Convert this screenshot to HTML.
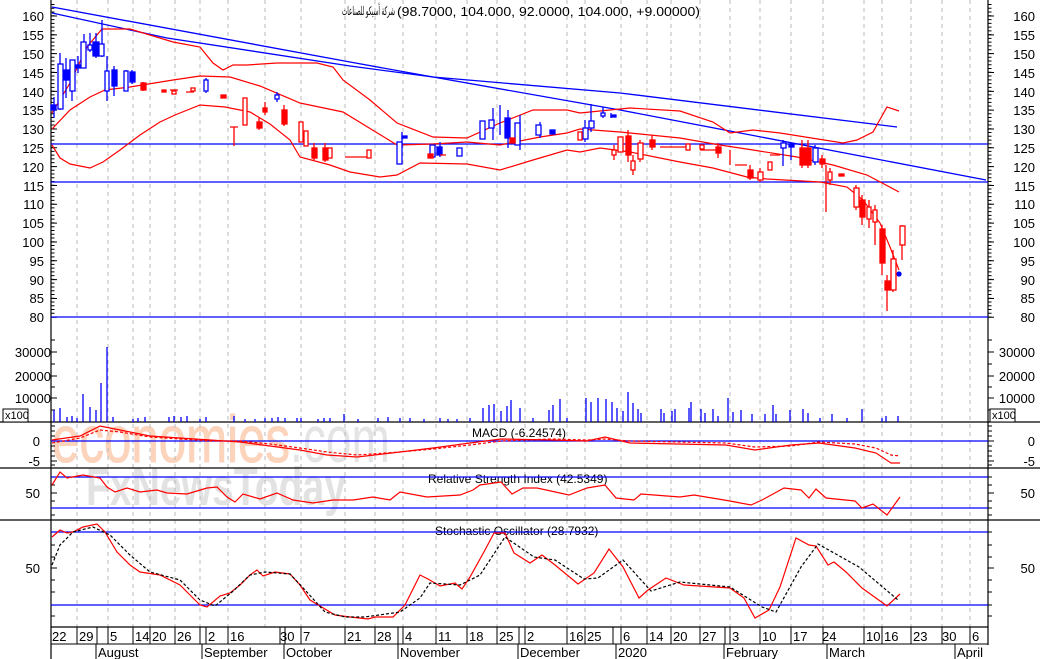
<!DOCTYPE html>
<html><head><meta charset="utf-8"><style>
html,body{margin:0;padding:0;background:#fff;width:1040px;height:659px;overflow:hidden}
svg{display:block}
text{font-family:"Liberation Sans",Arial,sans-serif;font-size:13px;fill:#000}
</style></head><body>
<svg width="1040" height="659" viewBox="0 0 1040 659" xmlns="http://www.w3.org/2000/svg">
<text x="52" y="462" textLength="238" lengthAdjust="spacingAndGlyphs" style="fill:#fcd3bb;font-size:66px;stroke:#fcd3bb;stroke-width:1">economies</text>
<text x="290" y="462" textLength="100" lengthAdjust="spacingAndGlyphs" style="fill:#e4e4e4;font-size:66px">.com</text>
<text x="86" y="505" textLength="260" lengthAdjust="spacingAndGlyphs" style="fill:#e2e2e2;font-size:54px;font-weight:bold">FxNewsToday</text>

<g stroke="#bbb" stroke-width="1" stroke-dasharray="4,4">
<path d="M77 0V627M108 0V627M133 0V627M150 0V627M175 0V627M200 0V627M228 0V627M265 0V627M301 0V627M345 0V627M375 0V627M403 0V627M436 0V627M467 0V627M497 0V627M525 0V627M567 0V627M585 0V627M621 0V627M647 0V627M671 0V627M700 0V627M730 0V627M760 0V627M791 0V627M823 0V627M864 0V627M882 0V627M911 0V627M942 0V627M970 0V627"/>
</g>

<g stroke="#000" stroke-width="1.2" fill="none">
<path d="M51 0V627H988V0"/>
<path d="M0 422H1040M0 468H1040M0 520H1040"/>
<path d="M51 627V659M988 627V645"/>
</g>
<g stroke="#000" stroke-width="3" fill="none" stroke-dasharray="1 2.766">
<path d="M53 4V320M990 4V320"/>
</g>
<g stroke="#000" stroke-width="6" fill="none" stroke-dasharray="1 17.83">
<path d="M54 15.5V320M991 15.5V320"/>
</g>
<g stroke="#000" stroke-width="1">
<path d="M51 352h6M51 376h6M51 398h6M51 340h4M51 364h4M51 387h4M51 410h4M988 352h6M988 376h6M988 398h6M988 340h4M988 364h4M988 387h4M988 410h4"/>
<path d="M51 426h4M51 431h4M51 436h4M51 441h6M51 446h4M51 451h4M51 456h4M51 461h6M51 465h4M988 426h4M988 431h4M988 436h4M988 441h6M988 446h4M988 451h4M988 456h4M988 461h6M988 465h4"/>
<path d="M51 477h4M51 485h4M51 493h6M51 501h4M51 508h4M51 515h4M988 477h4M988 485h4M988 493h6M988 501h4M988 508h4M988 515h4"/>
<path d="M51 532h4M51 545h4M51 557h4M51 568h6M51 580h4M51 592h4M51 605h4M51 616h4M988 532h4M988 545h4M988 557h4M988 568h6M988 580h4M988 592h4M988 605h4M988 616h4"/>
</g>

<g text-anchor="end">
<text x="44" y="21">160</text><text x="44" y="40">155</text><text x="44" y="59">150</text><text x="44" y="78">145</text><text x="44" y="97">140</text><text x="44" y="115">135</text><text x="44" y="134">130</text><text x="44" y="153">125</text><text x="44" y="172">120</text><text x="44" y="191">115</text><text x="44" y="209">110</text><text x="44" y="228">105</text><text x="44" y="247">100</text><text x="44" y="266">95</text><text x="44" y="285">90</text><text x="44" y="303">85</text><text x="44" y="322">80</text>
<text x="51" y="357">30000</text><text x="51" y="381">20000</text><text x="51" y="403">10000</text>
<text x="40" y="446">0</text><text x="40" y="466">-5</text><text x="40" y="498">50</text><text x="40" y="573">50</text>
</g>
<g text-anchor="end">
<text x="1035" y="21">160</text><text x="1035" y="40">155</text><text x="1035" y="59">150</text><text x="1035" y="78">145</text><text x="1035" y="97">140</text><text x="1035" y="115">135</text><text x="1035" y="134">130</text><text x="1035" y="153">125</text><text x="1035" y="172">120</text><text x="1035" y="191">115</text><text x="1035" y="209">110</text><text x="1035" y="228">105</text><text x="1035" y="247">100</text><text x="1035" y="266">95</text><text x="1035" y="285">90</text><text x="1035" y="303">85</text><text x="1035" y="322">80</text>
<text x="1035" y="357">30000</text><text x="1035" y="381">20000</text><text x="1035" y="403">10000</text>
<text x="1035" y="446">0</text><text x="1035" y="466">-5</text><text x="1035" y="498">50</text><text x="1035" y="573">50</text>
</g>
<rect x="3" y="409" width="25" height="13" fill="#fff" stroke="#000"/>
<text x="5" y="419" style="font-size:11px">x100</text>
<rect x="990" y="409" width="25" height="13" fill="#fff" stroke="#000"/>
<text x="992" y="419" style="font-size:11px">x100</text>

<text x="342" y="15" textLength="53" lengthAdjust="spacingAndGlyphs" style="font-size:12px">شركة أسيكو للصناعات</text>
<text x="397" y="16" textLength="303" lengthAdjust="spacingAndGlyphs" style="font-size:13px">(98.7000, 104.000, 92.0000, 104.000, +9.00000)</text>
<text x="472" y="437" style="font-size:12px">MACD (-6.24574)</text>
<text x="428" y="483" style="font-size:12px">Relative Strength Index (42.5349)</text>
<text x="435" y="535" style="font-size:12px">Stochastic Oscillator (28.7932)</text>

<g stroke="#0000ff" stroke-width="1.3" fill="none">
<path d="M51 144H988M51 182H988M51 317H988"/>
<path d="M51 441H988M51 477H988M51 508H988M51 532H988M51 605H988"/>
<polyline points="52,13 167,38 350,66 433,77 620,93 897,127"/>
<polyline points="52,7 350,62 433,77 620,110 986,180"/>
</g>

<g stroke="#ff0000" stroke-width="1.2" fill="none">
<polyline points="52,113 70,83 87,47 102,29 130,29 173,42 200,47 213,63 223,70 233,65 247,65 277,63 317,63 333,67 343,80 370,100 397,123 433,137 467,138 500,123 533,110 567,110 580,113 630,108 680,111 713,122 730,133 753,130 780,133 843,143 857,140 873,132 887,107 899,111"/>
<polyline points="52,129 70,110 90,97 105,90 130,87 173,80 200,76 230,77 260,86 300,103 343,112 397,145 433,144 467,142 500,145 540,137 567,133 580,129 620,132 680,138 720,145 753,150 797,157 833,165 867,175 899,192"/>
<polyline points="52,145 60,158 70,164 90,168 103,162 120,150 140,135 160,122 175,115 200,105 225,107 250,112 270,124 290,140 300,157 330,165 350,172 380,177 397,175 420,163 467,164 500,170 533,160 567,150 580,152 600,148 630,152 680,162 713,168 747,177 767,179 820,182 847,187 863,200 880,223 890,247 899,270"/>
</g>

<g stroke-width="1.3">
<g stroke="#0000ff" fill="#0000ff">
<path d="M54 97V118M60 53V110M66 58V98M72 62V101M78 56V73M84 34V68M90 33V52M96 33V58M102 20V57M107 56V101M114 66V96M126 70V91M132 70V84M206 78V93M277 92V102M402 132V148M440 142V157M493 108V140M500 105V135M508 110V148M520 115V150M540 122V138M585 120V142M591 104V132M603 107V118M611 113V118M783 140V166M791 143V160M815 145V165"/>
<rect x="51" y="105" width="5" height="5"/><rect x="64" y="70" width="5" height="10"/><rect x="75" y="65" width="5" height="3"/><rect x="93" y="42" width="6" height="14"/><rect x="112" y="70" width="5" height="16"/><rect x="130" y="72" width="5" height="10"/><rect x="402" y="136" width="5" height="2"/><rect x="437" y="147" width="5" height="8"/><rect x="505" y="118" width="5" height="20"/><rect x="550" y="130" width="5" height="4"/><rect x="611" y="115" width="5" height="2"/><rect x="789" y="144" width="5" height="3"/><circle cx="899" cy="274" r="2"/>
</g>
<g stroke="#0000ff" fill="#fff">
<rect x="58" y="64" width="5" height="45"/><rect x="70" y="60" width="5" height="31"/><rect x="81" y="42" width="5" height="26"/><rect x="88" y="45" width="4" height="5"/><rect x="99" y="44" width="5" height="12"/><rect x="105" y="71" width="4" height="20"/><rect x="124" y="71" width="4" height="20"/><rect x="204" y="80" width="4" height="11"/><rect x="275" y="95" width="4" height="4"/><rect x="397" y="142" width="5" height="22"/><rect x="430" y="145" width="5" height="12"/><rect x="457" y="148" width="5" height="8"/><rect x="480" y="121" width="5" height="18"/><rect x="489" y="120" width="5" height="8"/><rect x="515" y="123" width="5" height="22"/><rect x="536" y="125" width="5" height="10"/><rect x="583" y="128" width="5" height="11"/><rect x="589" y="121" width="5" height="7"/><rect x="601" y="113" width="4" height="3"/><rect x="781" y="143" width="5" height="5"/><rect x="813" y="148" width="5" height="14"/>
</g>
<g stroke="#ff0000" fill="#ff0000">
<path d="M234 127V146M143 82V91M259 118V130M265 102V115M284 105V126M314 143V160M325 143V162M614 145V160M628 130V162M633 155V175M640 140V162M652 135V150M718 143V158M730 150V165M750 165V180M760 168V182M802 140V168M808 140V168M822 155V168M826 165V212M830 168V185M856 185V210M862 195V225M869 200V228M875 205V245M882 225V275M887 275V311M893 250V292M902 225V260"/>
<rect x="141" y="83" width="5" height="7"/><rect x="162" y="90" width="4" height="2"/><rect x="221" y="95" width="5" height="3"/><rect x="257" y="122" width="5" height="6"/><rect x="263" y="108" width="4" height="4"/><rect x="282" y="110" width="5" height="14"/><rect x="312" y="148" width="5" height="10"/><rect x="323" y="148" width="5" height="12"/><rect x="428" y="154" width="5" height="4"/><rect x="510" y="138" width="5" height="5"/><rect x="626" y="136" width="5" height="19"/><rect x="650" y="140" width="5" height="7"/><rect x="716" y="147" width="5" height="6"/><rect x="748" y="170" width="5" height="8"/><rect x="800" y="148" width="5" height="17"/><rect x="806" y="148" width="5" height="17"/><rect x="820" y="159" width="5" height="5"/><rect x="839" y="174" width="5" height="2"/><rect x="860" y="200" width="5" height="17"/><rect x="880" y="229" width="5" height="34"/><rect x="885" y="281" width="5" height="9"/>
<path d="M170 90h8M186 92h8M230 127h8M345 157h22M440 155h6M660 147h30M700 150h20M735 165h12M770 155h10" fill="none"/>
</g>
<g stroke="#ff0000" fill="#fff">
<rect x="172" y="91" width="4" height="3"/><rect x="191" y="88" width="4" height="3"/><rect x="243" y="98" width="4" height="27"/><rect x="299" y="122" width="4" height="20"/><rect x="304" y="131" width="4" height="15"/><rect x="328" y="148" width="4" height="10"/><rect x="367" y="150" width="4" height="8"/><rect x="578" y="132" width="4" height="8"/><rect x="612" y="150" width="4" height="5"/><rect x="618" y="137" width="5" height="15"/><rect x="631" y="161" width="4" height="9"/><rect x="638" y="143" width="5" height="16"/><rect x="686" y="144" width="4" height="6"/><rect x="700" y="145" width="4" height="4"/><rect x="758" y="172" width="5" height="8"/><rect x="768" y="162" width="4" height="8"/><rect x="828" y="172" width="4" height="8"/><rect x="854" y="188" width="5" height="19"/><rect x="867" y="207" width="4" height="12"/><rect x="873" y="210" width="4" height="12"/><rect x="891" y="259" width="5" height="31"/><rect x="900" y="226" width="5" height="19"/>
</g>
</g>

<g stroke="#0000ff" stroke-width="1.3">
<path d="M54 422V410M60 422V408M67 422V417M72 422V416M77 422V418M83 422V394M90 422V407M96 422V410M101 422V383M107 422V347M113 422V417M133 422V419M138 422V418M145 422V417M169 422V417M174 422V416M181 422V417M187 422V416M200 422V419M206 422V417M234 422V416M245 422V419M255 422V419M265 422V418M272 422V418M278 422V417M285 422V418M297 422V418M301 422V418M318 422V419M324 422V418M330 422V418M344 422V414M358 422V419M378 422V418M388 422V417M400 422V418M410 422V418M424 422V419M440 422V418M448 422V419M457 422V419M470 422V418M483 422V408M489 422V405M494 422V404M501 422V411M507 422V406M511 422V400M520 422V408M533 422V418M549 422V410M553 422V405M560 422V399M567 422V418M586 422V398M591 422V402M598 422V398M606 422V399M612 422V402M617 422V408M623 422V411M628 422V392M633 422V403M638 422V409M641 422V413M661 422V409M664 422V413M672 422V411M675 422V409M689 422V408M691 422V402M701 422V409M705 422V413M713 422V409M718 422V416M728 422V398M733 422V412M741 422V410M752 422V414M765 422V414M773 422V405M776 422V414M790 422V410M803 422V409M808 422V413M820 422V418M832 422V414M847 422V418M862 422V409M882 422V418M886 422V416M898 422V416"/>
</g>

<polyline fill="none" stroke="#ff0000" stroke-width="1.2" points="52,440 80,436 100,426 120,430 150,436 180,438 210,440 240,442 270,446 300,450 327,455 357,457 400,452 433,448 470,443 501,439 551,440 587,441 605,437 630,443 726,445 755,450 791,445 819,443 855,448 876,453 891,463 900,463"/>
<polyline fill="none" stroke="#ff0000" stroke-width="1.2" stroke-dasharray="3,2" points="52,443 80,438 100,430 120,432 150,437 180,439 210,441 240,441 270,444 300,448 327,452 357,455 400,452 433,449 470,445 501,441 551,439 587,440 605,439 630,441 726,443 755,447 791,446 819,442 855,444 876,448 891,455 900,456"/>

<polyline fill="none" stroke="#ff0000" stroke-width="1.2" points="52,485 60,472 67,478 83,475 100,478 107,487 115,492 127,488 140,492 157,490 167,493 187,494 207,488 217,487 227,497 235,502 243,494 260,499 277,493 293,500 313,503 333,500 353,500 373,497 390,500 400,492 427,497 460,495 473,490 480,485 501,482 512,494 523,488 537,488 569,495 587,488 605,485 616,498 634,500 641,494 680,497 694,495 730,501 751,505 762,500 784,488 801,490 809,498 816,489 826,498 855,501 862,508 873,504 887,515 900,497"/>

<polyline fill="none" stroke="#ff0000" stroke-width="1.2" points="52,537 60,530 67,533 73,532 83,527 97,524 105,532 117,552 130,565 140,572 160,575 180,585 190,595 200,605 207,607 220,596 230,593 240,585 250,575 257,570 263,576 275,572 290,574 300,585 310,600 320,606 335,615 350,617 368,619 375,617 393,617 405,605 420,575 428,579 440,586 455,583 462,589 470,577 485,550 494,533 505,533 514,553 530,563 542,555 555,565 578,584 594,573 609,549 623,567 639,598 648,590 666,578 684,585 730,588 744,598 755,618 769,610 780,587 796,538 809,545 816,546 828,565 834,562 846,572 862,588 887,606 900,594"/>
<polyline fill="none" stroke="#000" stroke-width="1.2" stroke-dasharray="3,2" points="52,565 60,545 73,532 93,527 110,535 130,555 150,572 180,580 200,600 215,606 232,592 250,575 265,572 290,574 305,590 325,612 345,617 365,617 400,612 420,598 430,583 460,585 480,575 505,537 534,557 555,560 584,579 598,578 623,560 651,591 680,582 730,587 762,607 776,612 801,567 818,544 859,567 898,600"/>

<g stroke="#000" stroke-width="1">
<path d="M51 627H988M51 644H988"/>
<path d="M77 627V644M97 627V644M108 627V644M133 627V644M150 627V644M175 627V644M200 627V644M206 627V644M228 627V644M280 627V644M285 627V644M301 627V644M345 627V644M375 627V644M398 627V644M403 627V644M436 627V644M467 627V644M497 627V644M519 627V644M525 627V644M567 627V644M585 627V644M613 627V644M621 627V644M647 627V644M671 627V644M700 627V644M725 627V644M730 627V644M760 627V644M791 627V644M823 627V644M864 627V644M882 627V644M911 627V644M942 627V644M970 627V644"/>
<path d="M96 644V659M202 644V659M284 644V659M398 644V659M518 644V659M616 644V659M724 644V659M827 644V659M955 644V659"/>
</g>
<g style="font-size:13px">
<text x="52" y="641">22</text><text x="79" y="641">29</text><text x="110" y="641">5</text><text x="135" y="641">14</text><text x="152" y="641">20</text><text x="177" y="641">26</text><text x="208" y="641">2</text><text x="230" y="641">16</text><text x="280" y="641">30</text><text x="303" y="641">7</text><text x="347" y="641">21</text><text x="377" y="641">28</text><text x="405" y="641">4</text><text x="438" y="641">11</text><text x="469" y="641">18</text><text x="499" y="641">25</text><text x="527" y="641">2</text><text x="569" y="641">16</text><text x="587" y="641">25</text><text x="623" y="641">6</text><text x="649" y="641">14</text><text x="673" y="641">20</text><text x="702" y="641">27</text><text x="732" y="641">3</text><text x="762" y="641">10</text><text x="793" y="641">17</text><text x="822" y="641">24</text><text x="866" y="641">10</text><text x="884" y="641">16</text><text x="913" y="641">23</text><text x="942" y="641">30</text><text x="972" y="641">6</text>
<text x="98" y="657">August</text><text x="204" y="657">September</text><text x="286" y="657">October</text><text x="400" y="657">November</text><text x="520" y="657">December</text><text x="618" y="657">2020</text><text x="726" y="657">February</text><text x="829" y="657">March</text><text x="957" y="657">April</text>
</g>
</svg>
</body></html>
